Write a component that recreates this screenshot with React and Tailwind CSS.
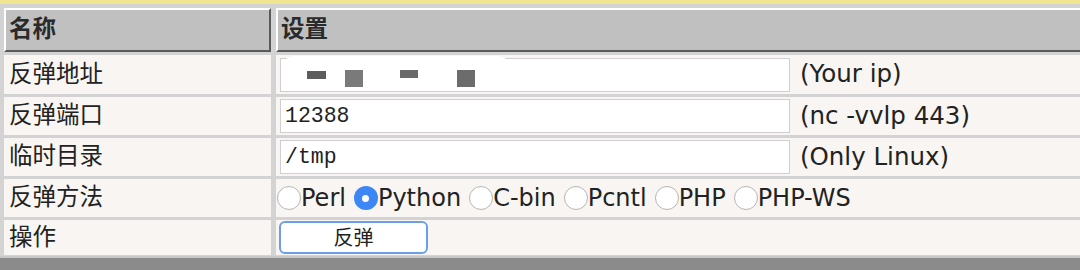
import React from 'react';

const font = { fontFamily: '"DejaVu Sans", "Noto Sans CJK SC", sans-serif' };

function Radio({ checked }) {
    return checked ? (
        <span className="inline-flex items-center justify-center h-[24px] w-[24px] rounded-full bg-[#3d86f5]">
            <span className="h-[7px] w-[7px] rounded-full bg-white" />
        </span>
    ) : (
        <span className="inline-block h-[24px] w-[24px] rounded-full bg-white border border-[#b5b5b5]" />
    );
}

function Row({ label, h, children }) {
    return (
        <div className={`flex gap-[5px] ${h}`}>
            <div className="w-[267px] bg-[#f8f5f2] flex items-center pl-[5px] text-[23.5px] text-[#222]">{label}</div>
            <div className="flex-1 bg-[#f8f5f2] flex items-center">{children}</div>
        </div>
    );
}

function TextBox({ children, mono = true }) {
    return (
        <div
            className="ml-[4px] w-[510px] h-[34px] bg-white border border-[#cfcfcf] flex items-center pl-[4px] text-[21.5px] text-[#222]"
            style={mono ? { fontFamily: '"Liberation Mono", monospace' } : undefined}
        >
            {children}
        </div>
    );
}

export default function App() {
    const methods = [
        { name: 'Perl' },
        { name: 'Python', checked: true },
        { name: 'C-bin' },
        { name: 'Pcntl' },
        { name: 'PHP' },
        { name: 'PHP-WS' },
    ];

    return (
        <div className="w-[1080px] h-[270px] bg-[#d3d3d3] overflow-hidden flex flex-col" style={font}>
            <div className="h-[4px] bg-[#efe490]" />
            <div className="pl-[4px] pt-[4px] flex flex-col gap-[3px]">
                {/* header */}
                <div className="flex gap-[5px] h-[44px]">
                    <div className="w-[267px] bg-[#c0c0c0] border-t-2 border-l-2 border-white border-b-2 border-r-2 border-b-[#5a5a5a] border-r-[#5a5a5a] flex items-center pl-[3px] text-[23.5px] font-bold text-[#2a2a2a]">
                        名称
                    </div>
                    <div className="flex-1 bg-[#c0c0c0] border-t-2 border-l-2 border-white border-b-2 border-b-[#5a5a5a] flex items-center pl-[3px] text-[23.5px] font-bold text-[#2a2a2a]">
                        设置
                    </div>
                </div>

                <Row label="反弹地址" h="h-[39px]">
                    <TextBox mono={false}>
                        {/* blurred-out address */}
                        <div className="relative flex-1 h-full">
                            <div className="absolute left-[-4px] top-[-3px] w-[230px] h-[28px] rounded-full bg-white" />
                            <span className="absolute left-[22px] top-[12px] w-[19px] h-[8px] bg-[#5c5c5c]" />
                            <span className="absolute left-[60px] top-[11px] w-[18px] h-[17px] bg-[#7a7a7a]" />
                            <span className="absolute left-[115px] top-[11px] w-[18px] h-[8px] bg-[#6a6a6a]" />
                            <span className="absolute left-[172px] top-[11px] w-[18px] h-[17px] bg-[#6c6c6c]" />
                        </div>
                    </TextBox>
                    <span className="ml-[10px] text-[24.5px] text-[#222]">(Your ip)</span>
                </Row>

                <Row label="反弹端口" h="h-[38px]">
                    <TextBox>12388</TextBox>
                    <span className="ml-[10px] text-[24.5px] text-[#222]">(nc -vvlp 443)</span>
                </Row>

                <Row label="临时目录" h="h-[38px]">
                    <TextBox>/tmp</TextBox>
                    <span className="ml-[10px] text-[24.5px] text-[#222]">(Only Linux)</span>
                </Row>

                <Row label="反弹方法" h="h-[38px]">
                    <div className="flex items-center pl-[1px] gap-[8px] text-[24px] text-[#222]">
                        {methods.map((m) => (
                            <label key={m.name} className="flex items-center">
                                <Radio checked={m.checked} />
                                <span>{m.name}</span>
                            </label>
                        ))}
                    </div>
                </Row>

                <Row label="操作" h="h-[35px]">
                    <button className="ml-[3px] w-[149px] h-[33px] bg-white border-2 border-[#6d9eeb] rounded-[6px] text-[20px] text-[#222] flex items-center justify-center">
                        反弹
                    </button>
                </Row>
            </div>
            <div className="mt-[1px] h-[2px] bg-[#c8c8c8]" />
            <div className="flex-1 bg-[#8b8b8b]" />
        </div>
    );
}
